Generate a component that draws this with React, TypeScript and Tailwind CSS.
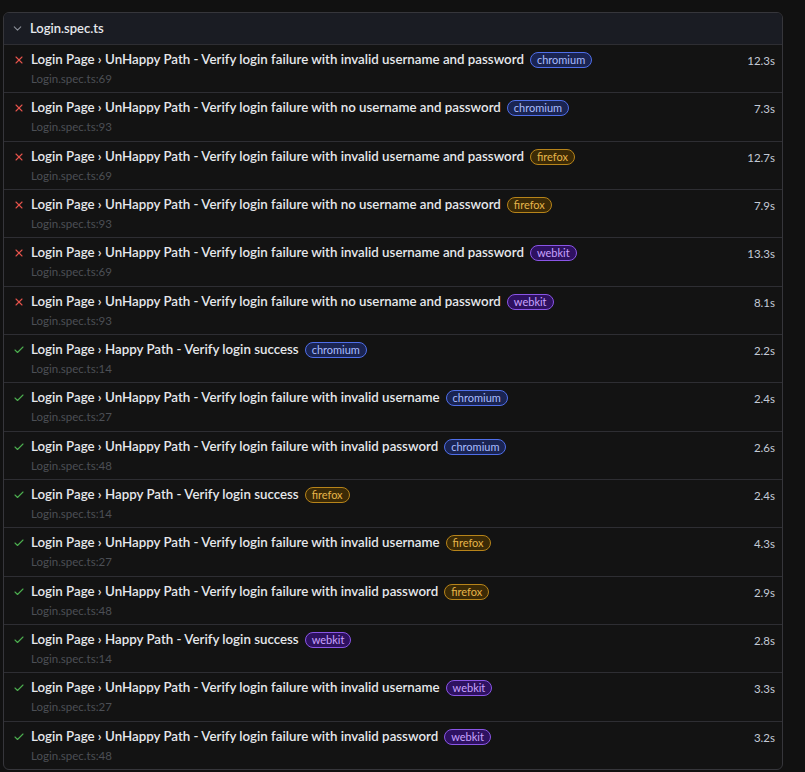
import { ChevronDown, X, Check } from "lucide-react";

type Browser = "chromium" | "firefox" | "webkit";

const tests: { ok: boolean; title: string; line: number; browser: Browser; time: string }[] = [
  { ok: false, title: "UnHappy Path - Verify login failure with invalid username and password", line: 69, browser: "chromium", time: "12.3s" },
  { ok: false, title: "UnHappy Path - Verify login failure with no username and password", line: 93, browser: "chromium", time: "7.3s" },
  { ok: false, title: "UnHappy Path - Verify login failure with invalid username and password", line: 69, browser: "firefox", time: "12.7s" },
  { ok: false, title: "UnHappy Path - Verify login failure with no username and password", line: 93, browser: "firefox", time: "7.9s" },
  { ok: false, title: "UnHappy Path - Verify login failure with invalid username and password", line: 69, browser: "webkit", time: "13.3s" },
  { ok: false, title: "UnHappy Path - Verify login failure with no username and password", line: 93, browser: "webkit", time: "8.1s" },
  { ok: true, title: "Happy Path - Verify login success", line: 14, browser: "chromium", time: "2.2s" },
  { ok: true, title: "UnHappy Path - Verify login failure with invalid username", line: 27, browser: "chromium", time: "2.4s" },
  { ok: true, title: "UnHappy Path - Verify login failure with invalid password", line: 48, browser: "chromium", time: "2.6s" },
  { ok: true, title: "Happy Path - Verify login success", line: 14, browser: "firefox", time: "2.4s" },
  { ok: true, title: "UnHappy Path - Verify login failure with invalid username", line: 27, browser: "firefox", time: "4.3s" },
  { ok: true, title: "UnHappy Path - Verify login failure with invalid password", line: 48, browser: "firefox", time: "2.9s" },
  { ok: true, title: "Happy Path - Verify login success", line: 14, browser: "webkit", time: "2.8s" },
  { ok: true, title: "UnHappy Path - Verify login failure with invalid username", line: 27, browser: "webkit", time: "3.3s" },
  { ok: true, title: "UnHappy Path - Verify login failure with invalid password", line: 48, browser: "webkit", time: "3.2s" },
];

const badgeStyles: Record<Browser, string> = {
  chromium: "border-[#4f6ee8] bg-[#1a2452] text-[#a9bcff]",
  firefox: "border-[#b7841a] bg-[#3b2a06] text-[#e6b54a]",
  webkit: "border-[#8a55e6] bg-[#2e1160] text-[#c9a2ff]",
};

const App = () => {
  return (
    <div className="min-h-[772px] bg-[#111111] pt-3 pl-[3px] pr-[22px] font-['Lato',sans-serif]">
      <div className="overflow-hidden rounded-md border border-[#36363b] bg-[#131313]">
        {/* file header */}
        <div className="flex h-[31px] items-center gap-[6px] bg-[#1a1c23] pl-[7px]">
          <ChevronDown size={13} strokeWidth={2} className="text-[#8b8f98]" />
          <span className="text-[13px] font-semibold text-[#e6e8ec]">Login.spec.ts</span>
        </div>
        {tests.map((t, i) => (
          <div key={i} className="flex h-[48.33px] border-t border-[#2e2e33] pt-[5px] pl-[9px] pr-[7px]">
            <div className="w-[18px] pt-[4px]">
              {t.ok ? (
                <Check size={12} strokeWidth={2.2} className="text-[#4cae4f]" />
              ) : (
                <X size={12} strokeWidth={2.2} className="text-[#e5534b]" />
              )}
            </div>
            <div className="flex-1">
              <div className="flex items-center gap-[6px] h-[20px]">
                <span className="text-[13.3px] font-semibold text-[#e6e8ec]">
                  Login Page › {t.title}
                </span>
                <span
                  className={`rounded-full border px-[6px] text-[11px] leading-[14px] ${badgeStyles[t.browser]}`}
                >
                  {t.browser}
                </span>
              </div>
              <div className="mt-[1px] text-[11.5px] leading-[16px] text-[#4c4f55]">Login.spec.ts:{t.line}</div>
            </div>
            <div className="pt-[2px] text-[11.5px] text-[#c3cad6]">{t.time}</div>
          </div>
        ))}
      </div>
    </div>
  );
};

export default App;
